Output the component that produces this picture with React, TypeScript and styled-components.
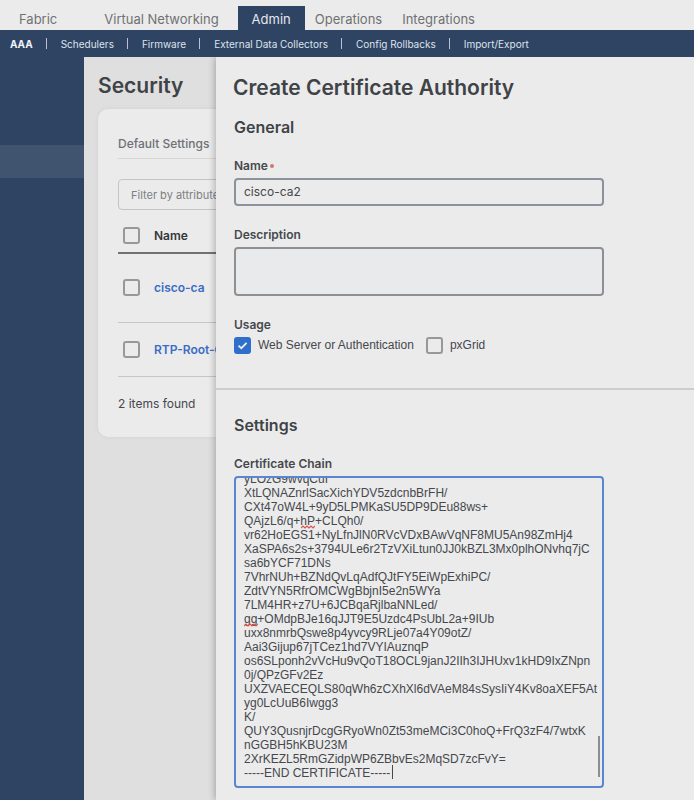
import React, { useLayoutEffect, useRef } from "react";
import styled, { createGlobalStyle } from "styled-components";

const c = {
  navy: "#2f4463",
  navyActive: "#40536f",
  surface: "#ebebeb",
  backdrop: "#dfdfe0",
  text: "#45484c",
  heading: "#3f4347",
  muted: "#6f7174",
  border: "#8e9093",
  line: "#c6c6c7",
  blue: "#2f6fcb",
  link: "#3b6cc6",
};

const compactFont = `"Liberation Sans", Arial, sans-serif`;

const GlobalStyle = createGlobalStyle`
  *, *::before, *::after { box-sizing: border-box; }
  body {
    margin: 0;
    background: ${c.surface};
    color: ${c.text};
    font-family: Inter, "Liberation Sans", sans-serif;
    font-size: 12px;
  }
  h1, h2, h3, p { margin: 0; }
  input, textarea, button { font: inherit; color: inherit; }
`;

const Page = styled.div`
  display: flex;
  flex-direction: column;
  min-height: 100vh;
`;

const TabBar = styled.nav`
  display: flex;
  align-items: flex-end;
  padding-top: 6px;
  padding-left: 9px;
`;

const Tab = styled.a<{ $active?: boolean; $end?: number }>`
  padding: 2px ${(p) => (p.$active ? 14 : 10)}px 0;
  margin-right: ${(p) => p.$end ?? 0}px;
  font-size: 13px;
  line-height: 22px;
  white-space: nowrap;
  text-decoration: none;
  color: ${(p) => (p.$active ? "#e3e7ee" : c.muted)};
  background: ${(p) => (p.$active ? c.navy : "transparent")};
`;

const SubNav = styled.nav`
  display: flex;
  align-items: center;
  height: 27px;
  padding-left: 10px;
  background: ${c.navy};
`;

const SubLink = styled.a<{ $active?: boolean }>`
  display: flex;
  align-items: center;
  font-size: 10px;
  line-height: 12px;
  font-weight: ${(p) => (p.$active ? 700 : 400)};
  color: ${(p) => (p.$active ? "#f0f3f8" : "#dde3ec")};
  text-decoration: none;
  white-space: nowrap;

  &:not(:first-child)::before {
    content: "";
    width: 1px;
    height: 11px;
    margin: 0 14px 0 13px;
    background: #b9c3d3;
  }
`;

const Body = styled.div`
  display: flex;
  flex: 1;
`;

const Sidebar = styled.aside`
  flex: none;
  width: 84px;
  padding-top: 88px;
  background: ${c.navy};
`;

const SidebarCurrent = styled.div`
  height: 33px;
  background: ${c.navyActive};
`;

const Main = styled.main`
  flex: none;
  width: 132px;
  padding: 17px 0 0 14px;
  overflow: hidden;
  background: ${c.backdrop};
`;

const PageTitle = styled.h1`
  font-size: 21px;
  line-height: 24px;
  font-weight: 600;
  color: ${c.heading};
  white-space: nowrap;
`;

const Card = styled.section`
  width: 480px;
  height: 328px;
  margin-top: 11px;
  padding: 25px 20px;
  border-radius: 10px;
  background: ${c.surface};
  box-shadow: 0 0 5px rgba(0, 0, 0, 0.06);
`;

const CardTab = styled.h2`
  padding-bottom: 4px;
  border-bottom: 1px solid #d6d6d7;
  font-size: 12px;
  line-height: 20px;
  font-weight: 500;
  color: ${c.muted};
`;

const Filter = styled.input`
  display: block;
  width: 100%;
  height: 31px;
  margin: 20px 0 9px;
  padding: 0 12px;
  border: 1px solid #c4c4c5;
  border-radius: 4px;
  background: transparent;
  font-size: 11px;
  &::placeholder { color: #7d7f82; opacity: 1; }
`;

const Table = styled.table`
  width: 100%;
  border-collapse: collapse;
  text-align: left;
  th, td { padding: 0; vertical-align: middle; }
  th:first-child, td:first-child { width: 36px; padding-left: 5px; }
  thead th { height: 34px; border-bottom: 2px solid #707172; font-weight: 600; color: #34373a; }
  td { border-bottom: 1px solid ${c.line}; }
`;

const Row = styled.tr<{ $height: number }>`
  height: ${(p) => p.$height}px;
`;

const CertLink = styled.a`
  color: ${c.link};
  font-weight: 600;
  text-decoration: none;
  white-space: nowrap;
`;

const Count = styled.p`
  margin-top: 17px;
  line-height: 20px;
`;

const Check = styled.span`
  position: relative;
  display: block;
  flex: none;
  width: 17px;
  height: 17px;

  svg {
    position: absolute;
    inset: 0;
    pointer-events: none;
    visibility: hidden;
  }
  input:checked + svg { visibility: visible; }
`;

const CheckInput = styled.input`
  appearance: none;
  display: block;
  width: 17px;
  height: 17px;
  margin: 0;
  border: 2px solid #96989a;
  border-radius: 3px;
  background: transparent;
  &:checked { background: ${c.blue}; border-color: ${c.blue}; }
`;

const Drawer = styled.section`
  position: relative;
  flex: 1;
  min-width: 0;
  padding: 19px 0 12px;
  background: ${c.surface};
  box-shadow: -1px 0 7px rgba(0, 0, 0, 0.28);
  clip-path: inset(0 0 0 -12px);
`;

const DrawerTitle = styled.h2`
  padding-left: 17px;
  font-size: 21px;
  line-height: 24px;
  font-weight: 600;
  color: ${c.heading};
`;

const Group = styled.div`
  padding: 0 18px;
`;

const GroupTitle = styled.h3`
  padding-top: 17px;
  font-size: 16px;
  line-height: 20px;
  font-weight: 600;
  color: ${c.heading};
`;

const Divider = styled.hr`
  height: 2px;
  margin: 34px 0 8px;
  border: 0;
  background: #cdcdce;
`;

const Field = styled.div`
  max-width: 370px;
  margin-top: 21px;
`;

const Label = styled.label`
  display: flex;
  align-items: center;
  gap: 2px;
  margin-bottom: 4px;
  font-size: 12px;
  line-height: 16px;
  font-weight: 600;
  color: ${c.text};
`;

const Required = styled.span`
  width: 4px;
  height: 4px;
  border-radius: 50%;
  background: #d07a66;
`;

const TextInput = styled.input`
  display: block;
  width: 100%;
  height: 28px;
  padding: 0 8px 2px;
  border: 2px solid #8b919d;
  border-radius: 4px;
  background: transparent;
`;

const TextArea = styled.textarea`
  display: block;
  width: 100%;
  height: 49px;
  padding: 6px 8px;
  border: 2px solid ${c.border};
  border-radius: 4px;
  background: #e9eaeb;
  line-height: 14px;
  resize: none;
  outline: none;
`;

const CertArea = styled(TextArea)`
  height: 312px;
  border-color: #5b86cf;
  background: transparent;
  font-family: ${compactFont};
  white-space: pre;
  overflow: hidden;
`;

const CertBox = styled.div`
  position: relative;
`;

const ScrollThumb = styled.span`
  position: absolute;
  right: 4px;
  bottom: 11px;
  width: 2px;
  height: 41px;
  background: #8c8e91;
`;

const Caret = styled.span`
  position: absolute;
  left: 158px;
  bottom: 9px;
  width: 1px;
  height: 14px;
  background: #45484c;
`;

const Squiggle = styled.svg<{ $left: number; $top: number }>`
  position: absolute;
  left: ${(p) => p.$left}px;
  top: ${(p) => p.$top}px;
`;

const Legend = styled.legend`
  padding: 0;
  margin-bottom: 4px;
  font-size: 12px;
  line-height: 16px;
  font-weight: 600;
`;

const Usage = styled.fieldset`
  margin: 21px 0 0;
  padding: 0;
  border: 0;
  min-width: 0;
`;

const Options = styled.div`
  display: flex;
  gap: 12px;
`;

const Option = styled.label`
  display: flex;
  align-items: center;
  gap: 7px;
  font-family: ${compactFont};
  line-height: 17px;
  white-space: nowrap;
`;

const certificate = [
  "yLOzG9wvqCuI",
  "XtLQNAZnrlSacXichYDV5zdcnbBrFH/",
  "CXt47oW4L+9yD5LPMKaSU5DP9DEu88ws+",
  "QAjzL6/q+hP+CLQh0/",
  "vr62HoEGS1+NyLfnJlN0RVcVDxBAwVqNF8MU5An98ZmHj4",
  "XaSPA6s2s+3794ULe6r2TzVXiLtun0JJ0kBZL3Mx0plhONvhq7jC",
  "sa6bYCF71DNs",
  "7VhrNUh+BZNdQvLqAdfQJtFY5EiWpExhiPC/",
  "ZdtVYN5RfrOMCWgBbjnI5e2n5WYa",
  "7LM4HR+z7U+6JCBqaRjlbaNNLed/",
  "gg+OMdpBJe16qJJT9E5Uzdc4PsUbL2a+9IUb",
  "uxx8nmrbQswe8p4yvcy9RLje07a4Y09otZ/",
  "Aai3Gijup67jTCez1hd7VYIAuznqP",
  "os6SLponh2vVcHu9vQoT18OCL9janJ2IIh3IJHUxv1kHD9IxZNpn",
  "0j/QPzGFv2Ez",
  "UXZVAECEQLS80qWh6zCXhXl6dVAeM84sSysIiY4Kv8oaXEF5At",
  "yg0LcUuB6Iwgg3",
  "K/",
  "QUY3QusnjrDcgGRyoWn0Zt53meMCi3C0hoQ+FrQ3zF4/7wtxK",
  "nGGBH5hKBU23M",
  "2XrKEZL5RmGZidpWP6ZBbvEs2MqSD7zcFvY=",
  "-----END CERTIFICATE-----",
].join("\n");

function Checkbox(props: React.InputHTMLAttributes<HTMLInputElement>) {
  return (
    <Check>
      <CheckInput type="checkbox" {...props} />
      <svg width="17" height="17" viewBox="0 0 17 17" aria-hidden="true">
        <path d="M4.5 8.7 7.3 11.2 12.6 5.8" fill="none" stroke="#e9eef6" strokeWidth="1.8" />
      </svg>
    </Check>
  );
}

function Misspelling({ left, top }: { left: number; top: number }) {
  return (
    <Squiggle $left={left} $top={top} width="14" height="4" viewBox="0 0 14 4" aria-hidden="true">
      <path
        d="M0 3 2 1 4 3 6 1 8 3 10 1 12 3 14 1"
        fill="none"
        stroke="#d9534f"
        strokeWidth="1.2"
      />
    </Squiggle>
  );
}

function CertificateChain() {
  const area = useRef<HTMLTextAreaElement>(null);
  useLayoutEffect(() => {
    if (area.current) area.current.scrollTop = area.current.scrollHeight;
  }, []);
  return (
    <Field>
      <Label htmlFor="chain">Certificate Chain</Label>
      <CertBox>
        <CertArea id="chain" ref={area} defaultValue={certificate} spellCheck={false} />
        <Misspelling left={67} top={49} />
        <Misspelling left={10} top={147} />
        <Caret />
        <ScrollThumb />
      </CertBox>
    </Field>
  );
}

const subLinks = [
  "AAA",
  "Schedulers",
  "Firmware",
  "External Data Collectors",
  "Config Rollbacks",
  "Import/Export",
];

export default function App() {
  return (
    <Page>
      <GlobalStyle />
      <TabBar aria-label="Main">
        <Tab href="#fabric" $end={27}>Fabric</Tab>
        <Tab href="#virtual" $end={9}>Virtual Networking</Tab>
        <Tab href="#admin" $active aria-current="page">Admin</Tab>
        <Tab href="#operations">Operations</Tab>
        <Tab href="#integrations">Integrations</Tab>
      </TabBar>
      <SubNav aria-label="Admin">
        {subLinks.map((name, i) => (
          <SubLink key={name} href="#admin" $active={i === 0}>{name}</SubLink>
        ))}
      </SubNav>
      <Body>
        <Sidebar>
          <SidebarCurrent />
        </Sidebar>
        <Main>
          <PageTitle>Security</PageTitle>
          <Card>
            <CardTab>Default Settings</CardTab>
            <Filter placeholder="Filter by attributes" aria-label="Filter by attributes" />
            <Table>
              <thead>
                <tr>
                  <th><Checkbox aria-label="Select all" /></th>
                  <th>Name</th>
                </tr>
              </thead>
              <tbody>
                <Row $height={69}>
                  <td><Checkbox aria-label="Select cisco-ca" /></td>
                  <td><CertLink href="#cisco-ca">cisco-ca</CertLink></td>
                </Row>
                <Row $height={54}>
                  <td><Checkbox aria-label="Select RTP-Root-CA" /></td>
                  <td><CertLink href="#rtp-root-ca">RTP-Root-CA</CertLink></td>
                </Row>
              </tbody>
            </Table>
            <Count>2 items found</Count>
          </Card>
        </Main>
        <Drawer aria-label="Create Certificate Authority">
          <DrawerTitle>Create Certificate Authority</DrawerTitle>
          <Group>
            <GroupTitle>General</GroupTitle>
            <Field>
              <Label htmlFor="name">Name<Required /></Label>
              <TextInput id="name" defaultValue="cisco-ca2" required />
            </Field>
            <Field>
              <Label htmlFor="description">Description</Label>
              <TextArea id="description" />
            </Field>
            <Usage>
              <Legend>Usage</Legend>
              <Options>
                <Option><Checkbox defaultChecked />Web Server or Authentication</Option>
                <Option><Checkbox />pxGrid</Option>
              </Options>
            </Usage>
          </Group>
          <Divider />
          <Group>
            <GroupTitle>Settings</GroupTitle>
            <CertificateChain />
          </Group>
        </Drawer>
      </Body>
    </Page>
  );
}
